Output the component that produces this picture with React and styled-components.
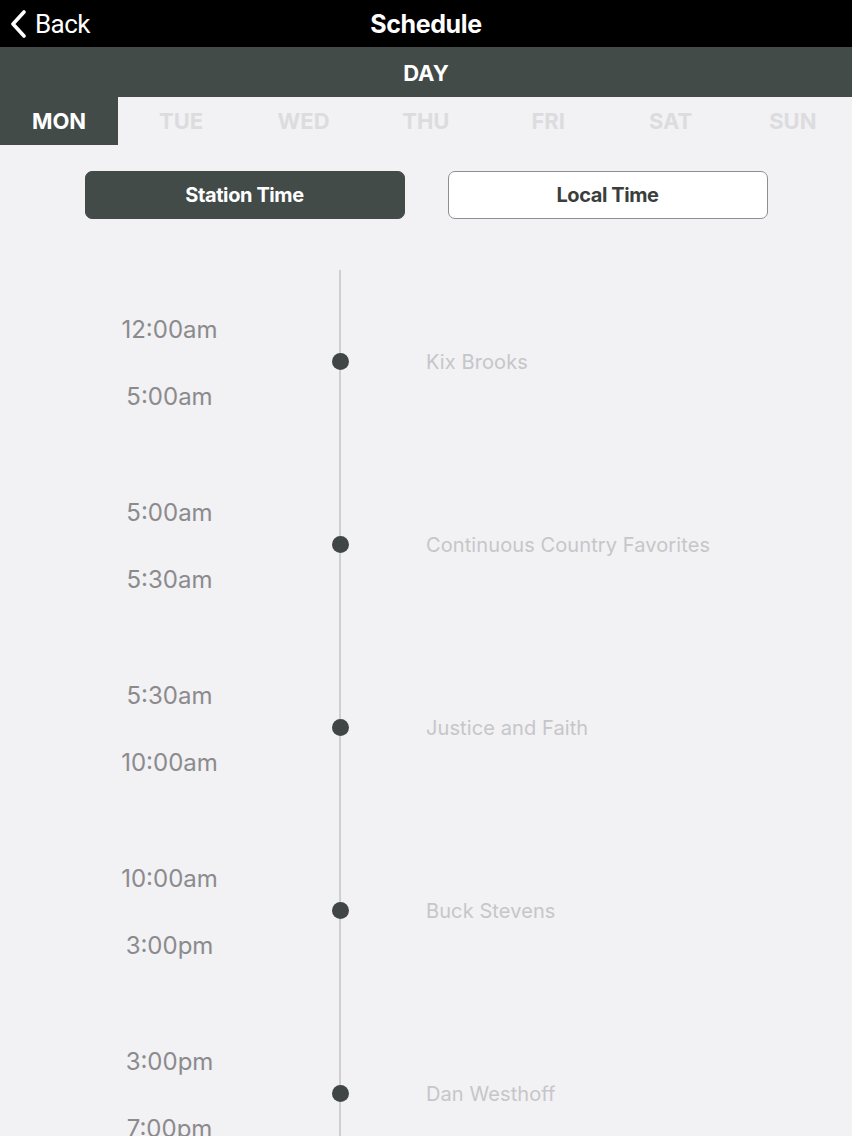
import React from "react";
import styled, { createGlobalStyle } from "styled-components";

const Global = createGlobalStyle`
  html, body { margin: 0; padding: 0; background: #f2f1f4; overflow: hidden; }
  body { font-family: Inter, Roboto, "Liberation Sans", sans-serif; }
  * { box-sizing: border-box; }
`;

const Page = styled.div`
  width: 852px;
  height: 1136px;
  overflow: hidden;
  background: #f2f1f4;
`;

const TopBar = styled.header`
  height: 47px;
  background: #000;
  display: grid;
  grid-template-columns: 1fr auto 1fr;
  align-items: center;
  color: #fff;
`;

const BackButton = styled.div`
  display: flex;
  align-items: center;
  gap: 9px;
  padding-left: 10px;
  font-family: Roboto, "Liberation Sans", sans-serif;
  font-size: 26px;
  font-weight: 400;
  letter-spacing: -0.6px;
  svg { display: block; }
`;

const Title = styled.h1`
  margin: 0;
  font-size: 25px;
  font-weight: 700;
  letter-spacing: -0.4px;
`;

const DayBar = styled.div`
  height: 50px;
  background: #434b49;
  color: #fff;
  display: flex;
  align-items: center;
  justify-content: center;
  font-size: 22px;
  font-weight: 700;
  padding-top: 2px;
`;

const Tabs = styled.nav`
  display: grid;
  grid-template-columns: 118px repeat(6, 1fr);
  height: 48px;
`;

const Tab = styled.div`
  display: flex;
  align-items: center;
  justify-content: center;
  font-size: 22px;
  font-weight: 700;
  background: ${(p) => (p.$active ? "#434b49" : "transparent")};
  color: ${(p) => (p.$active ? "#fff" : "#dcdcdf")};
  padding-left: ${(p) => (p.$active ? "0" : "4px")};
`;

const Toggle = styled.div`
  display: flex;
  justify-content: center;
  gap: 43px;
  padding-top: 26px;
`;

const ToggleButton = styled.div`
  width: 320px;
  height: 48px;
  border-radius: 7px;
  display: flex;
  align-items: center;
  justify-content: center;
  font-size: 20px;
  font-weight: 700;
  letter-spacing: -0.4px;
  background: ${(p) => (p.$active ? "#434b49" : "#fff")};
  color: ${(p) => (p.$active ? "#fff" : "#3a3f3e")};
  border: 1px solid ${(p) => (p.$active ? "#434b49" : "#8e8e90")};
`;

const Timeline = styled.div`
  margin-top: 51px;
`;

const Entry = styled.div`
  display: grid;
  grid-template-columns: 339px 2px 1fr;
  height: 183px;
  align-items: center;
`;

const Times = styled.div`
  display: flex;
  flex-direction: column;
  align-items: center;
  gap: 37px;
  font-size: 24px;
  color: #8b8b8d;
  line-height: 30px;
  padding-top: 4px;
`;

const Rail = styled.div`
  align-self: stretch;
  background: #cfcfd2;
  display: flex;
  align-items: center;
  justify-content: center;
`;

const Dot = styled.span`
  flex: none;
  width: 17px;
  height: 17px;
  border-radius: 50%;
  background: #3f4644;
`;

const ShowName = styled.div`
  padding-left: 85px;
  font-size: 20px;
  color: #c6c6c9;
  letter-spacing: 0.1px;
`;

const days = ["MON", "TUE", "WED", "THU", "FRI", "SAT", "SUN"];

const shows = [
  { start: "12:00am", end: "5:00am", name: "Kix Brooks" },
  { start: "5:00am", end: "5:30am", name: "Continuous Country Favorites" },
  { start: "5:30am", end: "10:00am", name: "Justice and Faith" },
  { start: "10:00am", end: "3:00pm", name: "Buck Stevens" },
  { start: "3:00pm", end: "7:00pm", name: "Dan Westhoff" },
];

export default function App() {
  return (
    <Page>
      <Global />
      <TopBar>
        <BackButton>
          <svg width="16" height="28" viewBox="0 0 16 28" fill="none">
            <path d="M14 2 L3 14 L14 26" stroke="#fff" strokeWidth="3.6" strokeLinecap="round" strokeLinejoin="round" />
          </svg>
          Back
        </BackButton>
        <Title>Schedule</Title>
        <div />
      </TopBar>
      <DayBar>DAY</DayBar>
      <Tabs>
        {days.map((d, i) => (
          <Tab key={d} $active={i === 0}>{d}</Tab>
        ))}
      </Tabs>
      <Toggle>
        <ToggleButton $active>Station Time</ToggleButton>
        <ToggleButton>Local Time</ToggleButton>
      </Toggle>
      <Timeline>
        {shows.map((s) => (
          <Entry key={s.name}>
            <Times>
              <span>{s.start}</span>
              <span>{s.end}</span>
            </Times>
            <Rail>
              <Dot />
            </Rail>
            <ShowName>{s.name}</ShowName>
          </Entry>
        ))}
      </Timeline>
    </Page>
  );
}
